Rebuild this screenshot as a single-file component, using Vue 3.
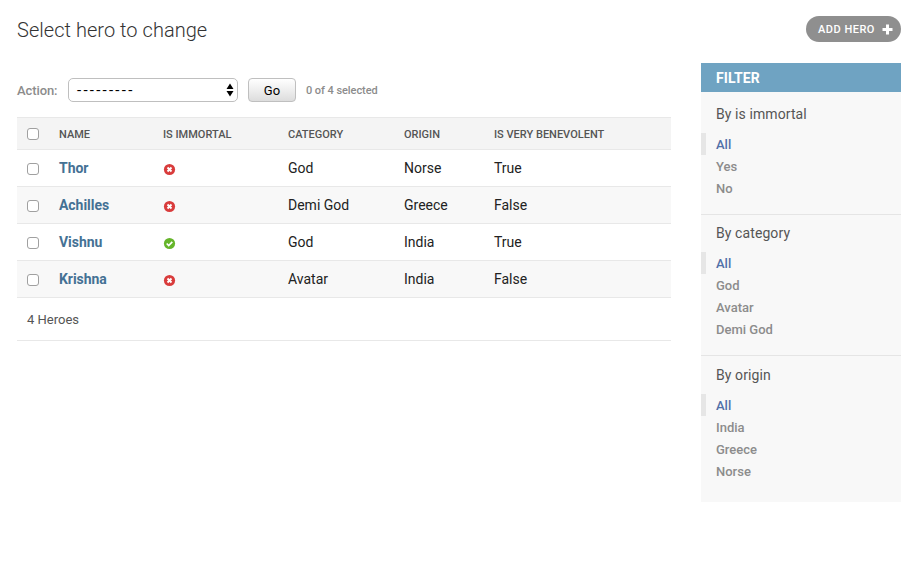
<script setup>
const heroes = [
  { name: 'Thor', immortal: false, category: 'God', origin: 'Norse', benevolent: 'True' },
  { name: 'Achilles', immortal: false, category: 'Demi God', origin: 'Greece', benevolent: 'False' },
  { name: 'Vishnu', immortal: true, category: 'God', origin: 'India', benevolent: 'True' },
  { name: 'Krishna', immortal: false, category: 'Avatar', origin: 'India', benevolent: 'False' },
]
const columns = ['NAME', 'IS IMMORTAL', 'CATEGORY', 'ORIGIN', 'IS VERY BENEVOLENT']
const filters = [
  { title: 'By is immortal', options: ['All', 'Yes', 'No'] },
  { title: 'By category', options: ['All', 'God', 'Avatar', 'Demi God'] },
  { title: 'By origin', options: ['All', 'India', 'Greece', 'Norse'] },
]
</script>

<template>
  <div class="page">
    <header class="top">
      <h1>Select hero to change</h1>
      <a class="add"><span class="add-label">ADD HERO</span>
        <svg width="11" height="11" viewBox="0 0 11 11"><path d="M4 .5h3V4h3.5v3H7v3.5H4V7H.5V4H4z" fill="#fff" /></svg>
      </a>
    </header>
    <div class="content">
      <main class="main">
        <div class="actions">
          <span class="action-label">Action:</span>
          <div class="select"><span class="dashes">---------</span>
            <svg width="8" height="14" viewBox="0 0 8 14"><path d="M4 0.5L7.5 6h-7zM4 13.5L.5 8h7z" fill="#000" /></svg>
          </div>
          <button class="go">Go</button>
          <span class="counter">0 of 4 selected</span>
        </div>
        <div class="table">
          <div class="row head">
            <span class="check"></span>
            <span v-for="column in columns" :key="column">{{ column }}</span>
          </div>
          <div v-for="hero in heroes" :key="hero.name" class="row">
            <span class="check"></span>
            <a class="name">{{ hero.name }}</a>
            <svg class="status" width="13" height="13" viewBox="0 0 13 13">
              <circle cx="6.5" cy="6.5" r="5.6" :fill="hero.immortal ? '#65b52a' : '#d93c3c'" />
              <path v-if="hero.immortal" d="M3.7 6.5L5.7 8.5L9.3 4.9" fill="none" stroke="#fff" stroke-width="1.7" />
              <path v-else d="M4.5 4.5L8.5 8.5M8.5 4.5L4.5 8.5" fill="none" stroke="#fff" stroke-width="1.9" />
            </svg>
            <span>{{ hero.category }}</span>
            <span>{{ hero.origin }}</span>
            <span>{{ hero.benevolent }}</span>
          </div>
        </div>
        <div class="paginator">4 Heroes</div>
      </main>
      <aside class="filter">
        <h2>FILTER</h2>
        <section v-for="group in filters" :key="group.title">
          <h3>{{ group.title }}</h3>
          <ul>
            <li v-for="(option, i) in group.options" :key="option" :class="{ selected: i === 0 }">{{ option }}</li>
          </ul>
        </section>
      </aside>
    </div>
  </div>
</template>

<style>
body { background: #fff; }
</style>

<style scoped>
.page {
  box-sizing: border-box;
  width: 914px;
  height: 572px;
  padding: 16px 13px 0 17px;
  overflow: hidden;
  font-family: Roboto, "Liberation Sans", sans-serif;
  color: #222;
}
.top { display: flex; justify-content: space-between; height: 47px; }
h1 { margin: 0; font-size: 20px; line-height: 28px; font-weight: 300; color: #333; letter-spacing: 0.04px; }
.add {
  display: flex;
  box-sizing: border-box;
  align-items: center;
  justify-content: space-between;
  width: 95px;
  height: 26px;
  padding: 0 8px 0 12px;
  border-radius: 13px;
  background: #8f8f8f;
  color: #fff;
  font-size: 11px;
  font-weight: 500;
  letter-spacing: 0.5px;
}
.add-label { white-space: nowrap; }
.content { display: flex; justify-content: space-between; align-items: flex-start; }
.main { width: 654px; padding-top: 15px; }
.actions { display: flex; align-items: center; height: 24px; margin-bottom: 15px; color: #8c8c8c; }
.action-label { width: 51px; font-size: 13px; font-weight: 500; letter-spacing: -0.1px; }
.select {
  display: flex;
  box-sizing: border-box;
  align-items: center;
  justify-content: space-between;
  width: 170px;
  height: 24px;
  margin-right: 10px;
  padding: 0 3px 0 8px;
  border: 1px solid #bfbfbf;
  border-radius: 5px;
  color: #000;
  font-size: 14px;
}
.dashes { font-size: 15px; letter-spacing: 2.25px; }
.go {
  width: 48px;
  height: 24px;
  margin: 0 10px 0 0;
  padding: 0;
  border: 1px solid #bfbfbf;
  border-radius: 4px;
  background: linear-gradient(#fff, #ddd);
  color: #000;
  font: 13px Roboto, sans-serif;
}
.counter { font-size: 11px; font-weight: 500; letter-spacing: -0.06px; }
.row {
  display: grid;
  grid-template-columns: 42px 104px 125px 116px 90px 1fr;
  box-sizing: border-box;
  align-items: center;
  height: 37px;
  border-bottom: 1px solid #e8e8e8;
  font-size: 14px;
}
.row:nth-child(odd) { background: #f8f8f8; }
.row.head {
  height: 33px;
  border-top: 1px solid #e8e8e8;
  background: #f4f4f4;
  color: #555;
  font-size: 11px;
  font-weight: 500;
  line-height: 14px;
}
.head span:not(.check) { padding-top: 3px; }
.check {
  box-sizing: border-box;
  width: 12px;
  height: 12px;
  margin: 2px 0 0 10px;
  border: 1px solid #a0a0a0;
  border-radius: 3px;
  background: #fff;
}
.head .check { margin-top: 0; }
.name { color: #447194; font-weight: 700; letter-spacing: -0.04px; }
.status { margin-top: 3px; }
.paginator {
  height: 42px;
  padding-left: 10px;
  border-bottom: 1px solid #e8e8e8;
  color: #555;
  font-size: 13px;
  line-height: 43px;
}
.filter { width: 200px; height: 439px; background: #f8f8f8; }
h2 {
  height: 29px;
  margin: 0;
  padding-left: 15px;
  background: #6fa3c2;
  color: #fff;
  font-size: 14px;
  font-weight: 700;
  line-height: 30px;
  letter-spacing: 0.1px;
}
section { padding: 4px 0 15px; border-bottom: 1px solid #e5e5e5; }
section + section { padding-top: 0; }
section:last-child { padding-top: 1px; border-bottom: 0; }
h3 { height: 37px; margin: 0; padding-left: 15px; color: #555; font-size: 14px; font-weight: 400; line-height: 37px; letter-spacing: 0.09px; }
ul { margin: 0; padding: 0; list-style: none; }
li { height: 22px; padding-left: 15px; color: #8c8c8c; font-size: 13px; font-weight: 500; line-height: 24px; }
li.selected { padding-left: 10px; border-left: 5px solid #e6e6e6; color: #5170a8; }
</style>
